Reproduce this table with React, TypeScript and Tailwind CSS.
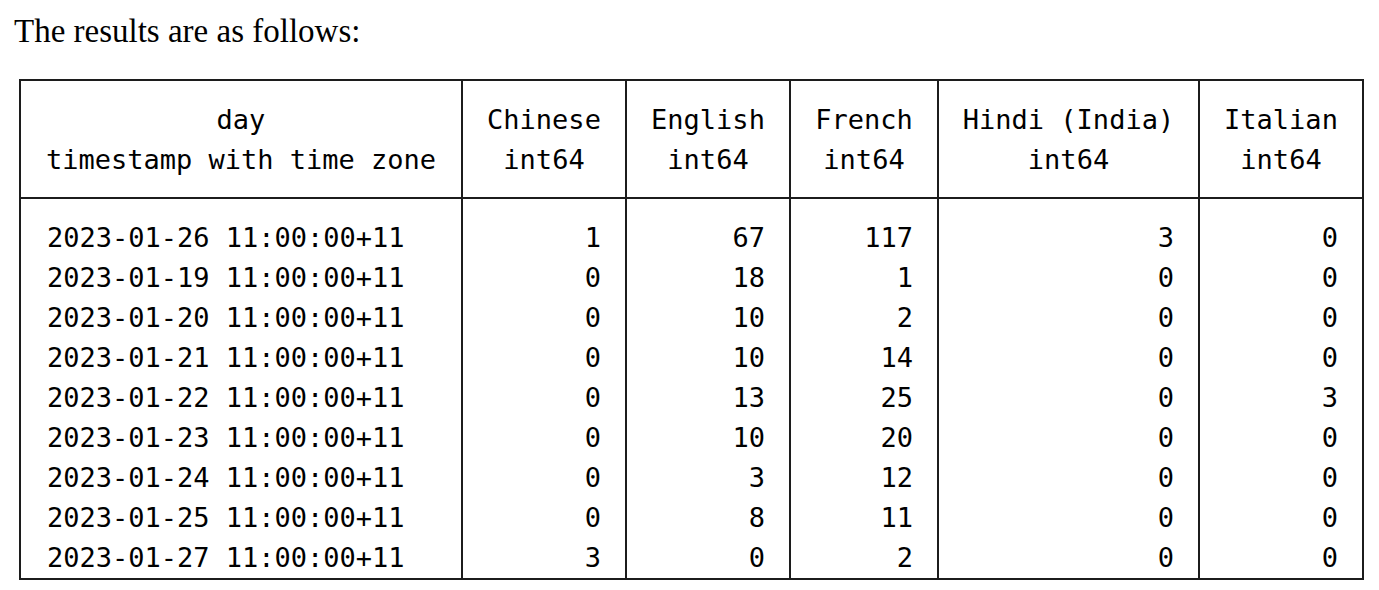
import React from 'react';

interface Column {
  name: string;
  type: string;
  width: string;
}

const columns: Column[] = [
  { name: 'day', type: 'timestamp with time zone', width: 'w-[442px]' },
  { name: 'Chinese', type: 'int64', width: 'w-[164px]' },
  { name: 'English', type: 'int64', width: 'w-[164px]' },
  { name: 'French', type: 'int64', width: 'w-[148px]' },
  { name: 'Hindi (India)', type: 'int64', width: 'w-[261px]' },
  { name: 'Italian', type: 'int64', width: 'w-[164px]' },
];

// day, Chinese, English, French, Hindi, Italian
const rows: [string, number, number, number, number, number][] = [
  ['2023-01-26 11:00:00+11', 1, 67, 117, 3, 0],
  ['2023-01-19 11:00:00+11', 0, 18, 1, 0, 0],
  ['2023-01-20 11:00:00+11', 0, 10, 2, 0, 0],
  ['2023-01-21 11:00:00+11', 0, 10, 14, 0, 0],
  ['2023-01-22 11:00:00+11', 0, 13, 25, 0, 3],
  ['2023-01-23 11:00:00+11', 0, 10, 20, 0, 0],
  ['2023-01-24 11:00:00+11', 0, 3, 12, 0, 0],
  ['2023-01-25 11:00:00+11', 0, 8, 11, 0, 0],
  ['2023-01-27 11:00:00+11', 3, 0, 2, 0, 0],
];

const mono = "font-['DejaVu_Sans_Mono','Liberation_Mono',monospace]";

const App: React.FC = () => {
  return (
    <div className="min-h-screen bg-white text-black">
      <p className="pl-[14px] pt-[11px] text-[33px] leading-[40px] font-['Liberation_Serif','Times_New_Roman',serif]">
        The results are as follows:
      </p>

      <table
        className={`ml-[19px] mt-[28px] border-collapse border-2 border-[#1c1c1c] table-fixed text-[27px] leading-[40px] ${mono}`}
      >
        <thead>
          <tr>
            {columns.map((col) => (
              <th
                key={col.name}
                className={`${col.width} border-2 border-[#1c1c1c] pt-[19px] pb-[17px] text-center font-normal whitespace-pre`}
              >
                <div>{col.name}</div>
                <div>{col.type}</div>
              </th>
            ))}
          </tr>
        </thead>
        <tbody>
          {rows.map((row, i) => (
            <tr key={row[0]}>
              {row.map((cell, j) => (
                <td
                  key={j}
                  className={`border-x-2 border-[#1c1c1c] p-0 whitespace-pre ${
                    i === 0 ? 'pt-[19px]' : ''
                  } ${j === 0 ? 'pl-[26px] text-left' : 'pr-[24px] text-right'}`}
                >
                  {cell}
                </td>
              ))}
            </tr>
          ))}
        </tbody>
      </table>
    </div>
  );
};

export default App;
